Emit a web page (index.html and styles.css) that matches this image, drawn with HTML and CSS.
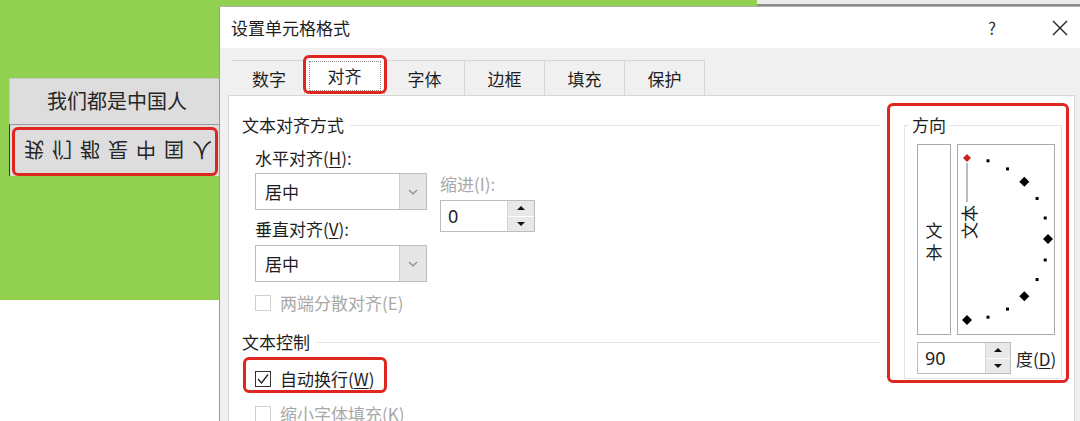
FILE: index.html
```html
<!DOCTYPE html>
<html lang="zh-CN">
<head>
  <meta charset="UTF-8">
  <title>设置单元格格式</title>
  <link rel="stylesheet" href="styles.css">
</head>
<body>

<!-- 工作表背景 -->
<div class="desk">
  <div class="sheet">
    <div class="cell">我们都是中国人</div>
    <div class="cell cell-flip mark"><span>我们都是中国人</span></div>
  </div>
  <div class="edge"></div>
</div>

<!-- 对话框 -->
<div class="dialog">
  <div class="titlebar">
    <span class="title">设置单元格格式</span>
    <span class="help">?</span>
    <svg class="close" width="16" height="16" viewBox="0 0 16 16">
      <path d="M1 1 L15 15 M15 1 L1 15" stroke="#222" stroke-width="1.4" fill="none"/>
    </svg>
  </div>

  <div class="tabs">
    <div class="tab tab-first">数字</div>
    <div class="tab active mark"><span class="focus">对齐</span></div>
    <div class="tab">字体</div>
    <div class="tab">边框</div>
    <div class="tab">填充</div>
    <div class="tab">保护</div>
  </div>

  <div class="panel">
    <div class="left">
      <div class="group-title">文本对齐方式</div>

      <div class="align-grid">
        <div class="col-a">
          <div class="label">水平对齐(<u>H</u>):</div>
          <div class="select">
            <span class="select-val">居中</span>
            <span class="select-btn">
              <svg width="10" height="6" viewBox="0 0 10 6"><path d="M1 1 L5 5 L9 1" stroke="#8a8a8a" stroke-width="1.2" fill="none"/></svg>
            </span>
          </div>
          <div class="label label-v">垂直对齐(<u>V</u>):</div>
          <div class="select select-v">
            <span class="select-val">居中</span>
            <span class="select-btn">
              <svg width="10" height="6" viewBox="0 0 10 6"><path d="M1 1 L5 5 L9 1" stroke="#8a8a8a" stroke-width="1.2" fill="none"/></svg>
            </span>
          </div>
        </div>
        <div class="col-b">
          <div class="label muted">缩进(I):</div>
          <div class="spin spin-indent">
            <span class="spin-val">0</span>
            <span class="spin-btns"><i class="up"></i><i class="down"></i></span>
          </div>
        </div>
      </div>

      <div class="check disabled row-justify"><span class="box"></span>两端分散对齐(E)</div>

      <div class="group-title title-ctrl">文本控制</div>

      <div class="check row-wrap mark">
        <span class="box checked">
          <svg width="14" height="14" viewBox="0 0 14 14"><path d="M2 7 L5.5 11 L12 2.5" stroke="#222" stroke-width="1.3" fill="none"/></svg>
        </span>自动换行(<u>W</u>)
      </div>

      <div class="check disabled row-shrink"><span class="box"></span>缩小字体填充(K)</div>
    </div>

    <div class="orient mark">
      <fieldset class="orient-box">
        <legend>方向</legend>
        <div class="dial-row">
          <div class="vert">文<br>本</div>
          <div class="dial">
            <svg width="96" height="189" viewBox="0 0 96 189">
              <line x1="9" y1="18" x2="9" y2="57" stroke="#7a7a7a" stroke-width="1"/>
              <text transform="translate(18,94) rotate(-90)" font-size="17" font-family="Noto Sans CJK SC, sans-serif" fill="#1e1e1e">文本</text>
              <polygon points="9,9 13,13 9,17 5,13" fill="#c8231d"/>
              <rect x="28.5" y="14.3" width="3" height="3" fill="#000"/>
              <rect x="48" y="22.4" width="3" height="3" fill="#000"/>
              <polygon points="66.3,31.7 71.3,36.7 66.3,41.7 61.3,36.7" fill="#000"/>
              <rect x="77.6" y="52" width="3" height="3" fill="#000"/>
              <rect x="85.7" y="71.5" width="3" height="3" fill="#000"/>
              <polygon points="90,89 95,94 90,99 85,94" fill="#000"/>
              <rect x="85.7" y="113.5" width="3" height="3" fill="#000"/>
              <rect x="77.6" y="133" width="3" height="3" fill="#000"/>
              <polygon points="66.3,146.3 71.3,151.3 66.3,156.3 61.3,151.3" fill="#000"/>
              <rect x="48" y="162.6" width="3" height="3" fill="#000"/>
              <rect x="28.5" y="170.7" width="3" height="3" fill="#000"/>
              <polygon points="9,170 14,175 9,180 4,175" fill="#000"/>
            </svg>
          </div>
        </div>
        <div class="deg-row">
          <div class="spin spin-deg">
            <span class="spin-val">90</span>
            <span class="spin-btns"><i class="up"></i><i class="down"></i></span>
          </div>
          <span class="deg-label">度(<u>D</u>)</span>
        </div>
      </fieldset>
    </div>
  </div>
</div>

</body>
</html>
```

FILE: styles.css
```css
:root {
  --green: #92d050;
  --red: #e0271f;
  --text: #1e1e1e;
  --muted: #a8a8a8;
  --line: #d6d6d6;
  --ctrl-border: #bdbdbd;
}

body {
  margin: 0;
  width: 1080px;
  height: 421px;
  overflow: hidden;
  position: relative;
  background: #fff;
  color: var(--text);
  font-family: "Noto Sans CJK SC", "Noto Sans", sans-serif;
  font-size: 17px;
}

u {
  text-decoration: underline;
  text-underline-offset: 2px;
}

/* 红色标注框 */
.mark {
  position: relative;
}

.mark::after {
  content: "";
  position: absolute;
  border: 3px solid var(--red);
  border-radius: 6px;
  pointer-events: none;
}

/* 工作表 */
.desk {
  display: flex;
  align-items: flex-start;
}

.sheet {
  width: 757px;
  height: 300px;
  background: var(--green);
  padding: 78px 0 0 9px;
  box-sizing: border-box;
}

.edge {
  flex: 1;
  height: 4px;
  background: #ececec;
  border-bottom: 2px solid #8c8c8c;
}

.cell {
  width: 217px;
  height: 46px;
  box-sizing: border-box;
  background: #dddddd;
  border-top: 1px solid #c4c4c4;
  border-left: 1px solid #c4c4c4;
  font-size: 20px;
  line-height: 44px;
  text-align: center;
  color: #262626;
  padding-right: 2px;
}

.cell-flip {
  height: 52px;
  border-left: 1px solid #3a3a3a;
  border-top: 1px solid #9a9a9a;
  line-height: 50px;
  padding: 0 0 0 8px;
}

.cell-flip span {
  display: inline-block;
  transform: scaleY(-1);
  letter-spacing: 8px;
  line-height: 26px;
}

.cell-flip::after {
  top: 2px;
  left: 2px;
  right: 8px;
  bottom: 0;
}

/* 对话框 */
.dialog {
  position: absolute;
  left: 219px;
  top: 6px;
  right: 0;
  bottom: 0;
  background: #f0f0f0;
  border-left: 1px solid #9a9a9a;
  border-top: 1px solid #b0b0b0;
}

.titlebar {
  height: 41px;
  background: #fff;
  display: flex;
  align-items: center;
  padding: 0 12px 0 11px;
}

.title {
  flex: 1;
}

.help {
  color: #333;
  width: 10px;
  text-align: center;
  margin-right: 55px;
}

.tabs {
  display: flex;
  padding: 12px 0 0 12px;
  height: 35px;
}

.tab {
  height: 35px;
  line-height: 35px;
  text-align: center;
  width: 80px;
  border-top: 1px solid var(--line);
  border-right: 1px solid var(--line);
  box-sizing: border-box;
}

.tab-first {
  width: 73px;
  padding-left: 2px;
}

.tab.active {
  background: #fff;
  height: 38px;
  margin-top: -3px;
  margin-bottom: -1px;
  line-height: 36px;
  position: relative;
  z-index: 2;
}

.tab.active::after {
  top: -3px;
  left: -2px;
  right: -3px;
  bottom: 1px;
}

.focus {
  display: inline-block;
  width: 72px;
  line-height: 28px;
  border: 1px dotted #8f8f8f;
  box-sizing: border-box;
}

.panel {
  margin-left: 8px;
  margin-right: 5px;
  background: #fff;
  border-top: 1px solid var(--line);
  border-left: 1px solid var(--line);
  border-right: 1px solid var(--line);
  display: flex;
  align-items: flex-start;
  height: 330px;
}

.left {
  width: 651px;
  padding: 18px 0 0 13px;
  box-sizing: border-box;
}

.group-title {
  display: flex;
  align-items: center;
  line-height: 22px;
  height: 22px;
}

.group-title::after {
  content: "";
  flex: 1;
  border-top: 1px solid #e6e6e6;
  margin-left: 6px;
}

.align-grid {
  display: flex;
  gap: 13px;
  padding-left: 13px;
}

.label {
  line-height: 22px;
  margin-top: 11px;
}

.label-v {
  margin-top: 8px;
}

.muted {
  color: var(--muted);
}

.select {
  width: 172px;
  height: 37px;
  margin-top: 4px;
  box-sizing: border-box;
  border: 1px solid var(--ctrl-border);
  display: flex;
  background: #fff;
}

.select-v {
  margin-top: 5px;
}

.select-val {
  flex: 1;
  line-height: 35px;
  padding-left: 9px;
}

.select-btn {
  width: 26px;
  background: #e6e6e6;
  border-left: 1px solid #d0d0d0;
  display: flex;
  align-items: center;
  justify-content: center;
}

.col-b {
  padding-top: 26px;
}

.spin {
  display: flex;
  height: 32px;
  box-sizing: border-box;
  border: 1px solid var(--ctrl-border);
  background: #fff;
}

.spin-indent {
  width: 95px;
  margin-top: 5px;
}

.spin-val {
  flex: 1;
  line-height: 30px;
  padding-left: 7px;
  font-family: "Noto Sans", "Noto Sans CJK SC", sans-serif;
  font-size: 18px;
}

.spin-btns {
  width: 26px;
  display: flex;
  flex-direction: column;
  border-left: 1px solid #d4d4d4;
}

.spin-btns i {
  flex: 1;
  background: #e8e8e8;
  display: flex;
  align-items: center;
  justify-content: center;
}

.spin-btns i + i {
  border-top: 1px solid #fff;
}

.spin-btns .up::before {
  content: "";
  border-left: 4px solid transparent;
  border-right: 4px solid transparent;
  border-bottom: 4px solid #111;
}

.spin-btns .down::before {
  content: "";
  border-left: 4px solid transparent;
  border-right: 4px solid transparent;
  border-top: 4px solid #111;
}

.check {
  display: flex;
  align-items: center;
  line-height: 22px;
  margin-left: 13px;
}

.check.disabled {
  color: var(--muted);
}

.box {
  width: 16px;
  height: 16px;
  box-sizing: border-box;
  border: 1px solid #cfcfcf;
  margin-right: 9px;
  display: flex;
  align-items: center;
  justify-content: center;
}

.box.checked {
  border-color: #333;
}

.row-justify {
  margin-top: 10px;
}

.title-ctrl {
  margin-top: 17px;
}

.row-wrap {
  margin-top: 15px;
  width: 128px;
}

.row-wrap::after {
  top: -11px;
  left: -12px;
  right: -4px;
  bottom: -3px;
}

.row-shrink {
  margin-top: 13px;
}

/* 方向 */
.orient {
  margin: 7px 0 0 7px;
  width: 182px;
  height: 280px;
}

.orient::after {
  inset: 0;
}

.orient-box {
  margin: 11px 7px 0 17px;
  padding: 8px 0 4px 12px;
  border: 1px solid #e4e4e4;
  min-width: 0;
}

.orient-box legend {
  padding: 0 3px;
  margin-left: -8px;
  line-height: 22px;
}

.dial-row {
  display: flex;
  gap: 6px;
}

.vert {
  width: 34px;
  height: 191px;
  box-sizing: border-box;
  border: 1px solid #a9a9a9;
  display: flex;
  align-items: center;
  justify-content: center;
  text-align: center;
  line-height: 22px;
  padding-top: 2px;
}

.dial {
  width: 98px;
  height: 191px;
  box-sizing: border-box;
  border: 1px solid #a9a9a9;
}

.dial svg {
  display: block;
}

.deg-row {
  display: flex;
  align-items: center;
  margin-top: 7px;
}

.spin-deg {
  width: 94px;
}

.spin-deg .spin-btns {
  width: 24px;
}

.deg-label {
  margin-left: 5px;
}
```
